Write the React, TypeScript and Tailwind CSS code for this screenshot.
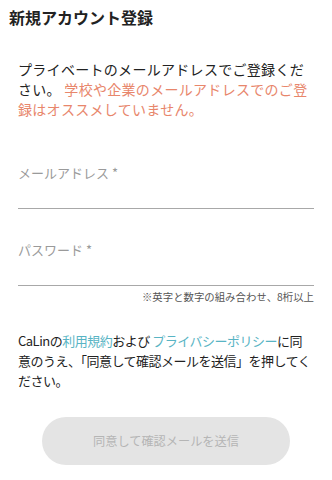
export default function App() {
  return (
    <div
      className="w-[332px] h-[480px] bg-white text-[#222] overflow-hidden"
      style={{ fontFamily: '"Noto Sans CJK JP", "Noto Sans", sans-serif' }}
    >
      {/* Header */}
      <h1 className="pl-[9px] pt-[6px] text-[16px] leading-[22px] font-bold">
        新規アカウント登録
      </h1>

      {/* Intro */}
      <p className="mt-[31px] px-[18px] text-[14px] leading-[20px] tracking-[0.3px]">
        プライベートのメールアドレスでご登録くだ
        <br />
        さい。{' '}
        <span className="text-[#e8866b]">
          学校や企業のメールアドレスでのご登
          <br />
          録はオススメしていません。
        </span>
      </p>

      {/* Form */}
      <div className="mt-[44px] px-[18px]">
        <div className="flex flex-col">
          <label className="text-[13px] leading-[20px] text-[#9a9a9a]">メールアドレス *</label>
          <div className="h-[26px] border-b border-[#a8a8a8]" />
        </div>
        <div className="mt-[31px] flex flex-col">
          <label className="text-[13px] leading-[20px] text-[#9a9a9a]">パスワード *</label>
          <div className="h-[26px] border-b border-[#a8a8a8]" />
        </div>
        <p className="mt-[5px] text-right text-[10.4px] leading-[12px] text-[#555]">
          ※英字と数字の組み合わせ、8桁以上
        </p>
      </div>

      {/* Terms */}
      <p className="mt-[28px] px-[18px] text-[13px] leading-[20px] tracking-[-0.5px]">
        CaLinの<span className="text-[#58b4c4]">利用規約</span>および{' '}
        <span className="text-[#58b4c4]">プライバシーポリシー</span>に同
        <br />
        意のうえ、「同意して確認メールを送信」を押してく
        <br />
        ださい。
      </p>

      {/* Submit */}
      <div className="mt-[26px] flex justify-center">
        <button
          disabled
          className="w-[248px] h-[48px] rounded-full bg-[#e4e4e4] text-[12.2px] text-[#b5b5b5]"
        >
          同意して確認メールを送信
        </button>
      </div>
    </div>
  );
}
